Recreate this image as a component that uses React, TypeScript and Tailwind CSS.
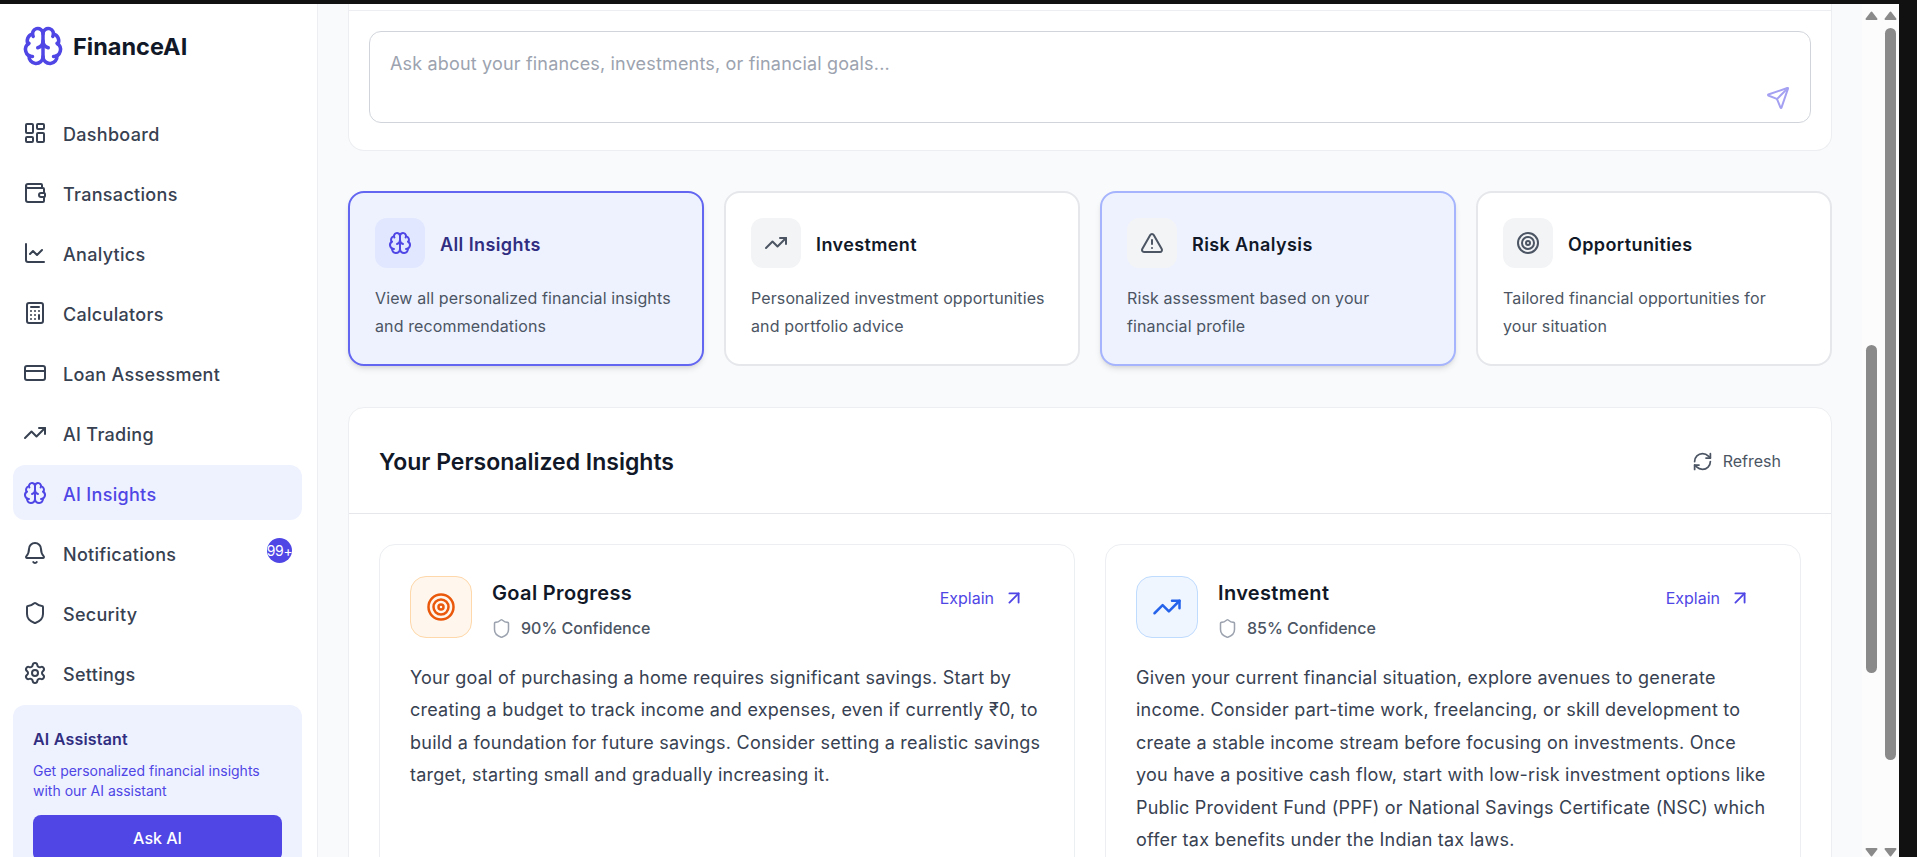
import {
  LayoutDashboard,
  Wallet,
  ChartLine,
  Calculator,
  CreditCard,
  TrendingUp,
  Brain,
  Bell,
  Shield,
  Settings,
  Send,
  TriangleAlert,
  Target,
  RefreshCw,
  ArrowUpRight,
} from "lucide-react";

const navItems = [
  { label: "Dashboard", icon: LayoutDashboard },
  { label: "Transactions", icon: Wallet },
  { label: "Analytics", icon: ChartLine },
  { label: "Calculators", icon: Calculator },
  { label: "Loan Assessment", icon: CreditCard },
  { label: "AI Trading", icon: TrendingUp },
  { label: "AI Insights", icon: Brain, active: true },
  { label: "Notifications", icon: Bell, badge: "99+" },
  { label: "Security", icon: Shield },
  { label: "Settings", icon: Settings },
];

const filters = [
  {
    title: "All Insights",
    text: "View all personalized financial insights and recommendations",
    icon: Brain,
    card: "border-[#6366f1] bg-[#eef2ff] shadow-md",
    box: "bg-[#e0e7ff] text-[#4f46e5]",
    heading: "text-[#312e81]",
  },
  {
    title: "Investment",
    text: "Personalized investment opportunities and portfolio advice",
    icon: TrendingUp,
    card: "border-[#e5e7eb] bg-white",
    box: "bg-[#f3f4f6] text-[#4b5563]",
    heading: "text-[#111827]",
  },
  {
    title: "Risk Analysis",
    text: "Risk assessment based on your financial profile",
    icon: TriangleAlert,
    card: "border-[#a5b4fc] bg-[#eef2ff] shadow-md",
    box: "bg-[#f3f4f6] text-[#4b5563]",
    heading: "text-[#111827]",
  },
  {
    title: "Opportunities",
    text: "Tailored financial opportunities for your situation",
    icon: Target,
    card: "border-[#e5e7eb] bg-white",
    box: "bg-[#f3f4f6] text-[#4b5563]",
    heading: "text-[#111827]",
  },
];

const insights = [
  {
    title: "Goal Progress",
    confidence: "90% Confidence",
    icon: Target,
    box: "border-[#fed7aa] bg-[#fff7ed] text-[#ea580c]",
    body: "Your goal of purchasing a home requires significant savings. Start by creating a budget to track income and expenses, even if currently ₹0, to build a foundation for future savings. Consider setting a realistic savings target, starting small and gradually increasing it.",
  },
  {
    title: "Investment",
    confidence: "85% Confidence",
    icon: TrendingUp,
    box: "border-[#bfdbfe] bg-[#eff6ff] text-[#2563eb]",
    body: "Given your current financial situation, explore avenues to generate income. Consider part-time work, freelancing, or skill development to create a stable income stream before focusing on investments. Once you have a positive cash flow, start with low-risk investment options like Public Provident Fund (PPF) or National Savings Certificate (NSC) which offer tax benefits under the Indian tax laws.",
  },
];

function Sidebar() {
  return (
    <aside className="flex h-full w-[318px] shrink-0 flex-col overflow-hidden border-r border-[#eceef1] bg-white pl-[13px] pr-[15px]">
      <div className="flex h-[101px] shrink-0 items-start pl-[10px] pt-[21px]">
        <Brain size={42} strokeWidth={2} className="-ml-[1px] text-[#4f46e5]" />
        <span className="ml-[9px] mt-[10px] text-[23.5px] leading-[24px] font-bold text-[#111827]">FinanceAI</span>
      </div>
      <nav className="flex flex-col gap-[5px]">
        {navItems.map((item) => {
          const Icon = item.icon;
          return (
            <div
              key={item.label}
              className={`flex h-[55px] items-center gap-[16px] rounded-xl pl-[10px] pr-[10px] text-[18px] font-medium tracking-[0.3px] ${
                item.active ? "bg-[#eef2ff] text-[#4f46e5]" : "text-[#374151]"
              }`}
            >
              <Icon size={24} strokeWidth={2} />
              <span className="mt-[3px]">{item.label}</span>
              {item.badge && (
                <span className="-mt-[4px] ml-auto flex h-[25px] w-[25px] items-center justify-center overflow-hidden rounded-full bg-[#4f46e5] text-[14px] font-normal tracking-tight text-white">
                  {item.badge}
                </span>
              )}
            </div>
          );
        })}
      </nav>
      <div className="mt-[5px] shrink-0 rounded-xl bg-[#eef2ff] px-[20px] pt-[20px] pb-[20px]">
        <h3 className="text-[16px] leading-[28px] font-semibold tracking-[0.2px] text-[#312e81]">AI Assistant</h3>
        <p className="mt-[8px] text-[14px] leading-[20px] text-[#4f46e5]">
          Get personalized financial insights with our AI assistant
        </p>
        <button className="mt-[14px] h-[46px] w-full rounded-lg bg-[#4f46e5] text-[16px] font-medium text-white">
          Ask AI
        </button>
      </div>
    </aside>
  );
}

function InsightCard({ item }: { item: (typeof insights)[number] }) {
  const Icon = item.icon;
  return (
    <div className="h-[400px] rounded-2xl border border-[#eceef1] bg-white p-[30px] pt-[31px]">
      <div className="flex items-start justify-between">
        <div className="flex gap-[20px]">
          <div className={`flex h-[62px] w-[62px] items-center justify-center rounded-2xl border ${item.box}`}>
            <Icon size={30} strokeWidth={2} />
          </div>
          <div>
            <h3 className="mt-[1px] text-[20px] leading-[32px] font-semibold tracking-[0.35px] text-[#111827]">{item.title}</h3>
            <div className="mt-[7px] flex items-center gap-[9px] text-[16px] leading-[24px] font-medium text-[#4b5563]">
              <Shield size={21} strokeWidth={1.75} className="-ml-[1px] text-[#9ca3af]" />
              {item.confidence}
            </div>
          </div>
        </div>
        <div className="mr-[19px] mt-[10px] flex items-center gap-[9px] text-[16px] leading-[24px] text-[#4f46e5]">
          Explain
          <ArrowUpRight size={22} />
        </div>
      </div>
      <p className="mt-[22px] text-[18px] leading-[32.4px] tracking-[0.23px] text-[#374151]">{item.body}</p>
    </div>
  );
}

function MainContent() {
  return (
    <main className="flex min-w-0 flex-1 flex-col overflow-hidden bg-[#f9fafb] px-[30px]">
      <section className="shrink-0 rounded-b-2xl border border-t-0 border-[#eceef1] bg-white px-[20px] pt-[6px] pb-[27px]">
        <div className="-mx-[20px] mb-[20px] border-t border-[#eceef1]" />
        <div className="relative h-[92px] rounded-xl border border-[#d1d5db] bg-white px-[20px] py-[18px] text-[18px] leading-[28px] tracking-[0.17px] text-[#9ca3af]">
          Ask about your finances, investments, or financial goals...
          <Send size={24} className="absolute right-[20px] bottom-[12px] text-[#a5a1f2]" />
        </div>
      </section>

      <section className="mt-[40px] grid shrink-0 grid-cols-4 gap-[20px]">
        {filters.map((f) => {
          const Icon = f.icon;
          return (
            <div key={f.title} className={`h-[175px] rounded-2xl border-2 px-[25px] py-[25px] ${f.card}`}>
              <div className="flex items-center gap-[15px]">
                <div className={`flex h-[50px] w-[50px] items-center justify-center rounded-xl ${f.box}`}>
                  <Icon size={24} />
                </div>
                <h3 className={`mt-[2px] text-[18px] font-semibold tracking-[0.4px] ${f.heading}`}>{f.title}</h3>
              </div>
              <p className="mt-[16px] pr-[6px] text-[16px] leading-[28px] tracking-[0.12px] text-[#4b5563]">{f.text}</p>
            </div>
          );
        })}
      </section>

      <section className="mt-[41px] shrink-0 rounded-t-2xl border border-[#eceef1] bg-white">
        <div className="flex h-[106px] items-center justify-between border-b border-[#e5e7eb] pl-[30px] pr-[50px]">
          <h2 className="mt-[3px] text-[23px] font-semibold text-[#111827]">Your Personalized Insights</h2>
          <div className="mt-[1px] flex items-center gap-[10px] text-[16px] font-normal text-[#4b5563]">
            <RefreshCw size={21} />
            Refresh
          </div>
        </div>
        <div className="grid grid-cols-2 gap-[30px] p-[30px]">
          {insights.map((item) => (
            <InsightCard key={item.title} item={item} />
          ))}
        </div>
      </section>
    </main>
  );
}

function ScrollBar({ thumbClass }: { thumbClass: string }) {
  return (
    <div className="flex h-full flex-col items-center justify-between pt-[7px]">
      <div className="flex flex-col items-center">
        <svg width="13" height="9" viewBox="0 0 13 9" className="text-[#8a8a8a]">
          <path d="M6.5 1.5 L11.5 8 L1.5 8 Z" fill="currentColor" stroke="currentColor" strokeWidth="2" strokeLinejoin="round" />
        </svg>
        <div className={`w-[11px] rounded-full bg-[#8a8a8a] ${thumbClass}`} />
      </div>
      <svg width="13" height="9" viewBox="0 0 13 9" className="text-[#8a8a8a]">
        <path d="M6.5 7.5 L11.5 1 L1.5 1 Z" fill="currentColor" stroke="currentColor" strokeWidth="2" strokeLinejoin="round" />
      </svg>
    </div>
  );
}

export default function App() {
  return (
    <div className="flex h-screen w-screen flex-col overflow-hidden bg-[#111111] font-['Inter',sans-serif]">
      <div className="h-[4px] shrink-0 bg-[#111111]" />
      <div className="flex min-h-0 flex-1">
        <Sidebar />
        <MainContent />
        <div className="h-full w-[21px] shrink-0 bg-[#fcfcfc] pr-[2px]">
          <ScrollBar thumbClass="mt-[325px] h-[328px]" />
        </div>
        <div className="h-full w-[16px] shrink-0 bg-[#fcfcfc] pr-[1px]">
          <ScrollBar thumbClass="mt-[8px] h-[732px]" />
        </div>
        <div className="h-full w-[18px] shrink-0 bg-[#111111]" />
      </div>
    </div>
  );
}
